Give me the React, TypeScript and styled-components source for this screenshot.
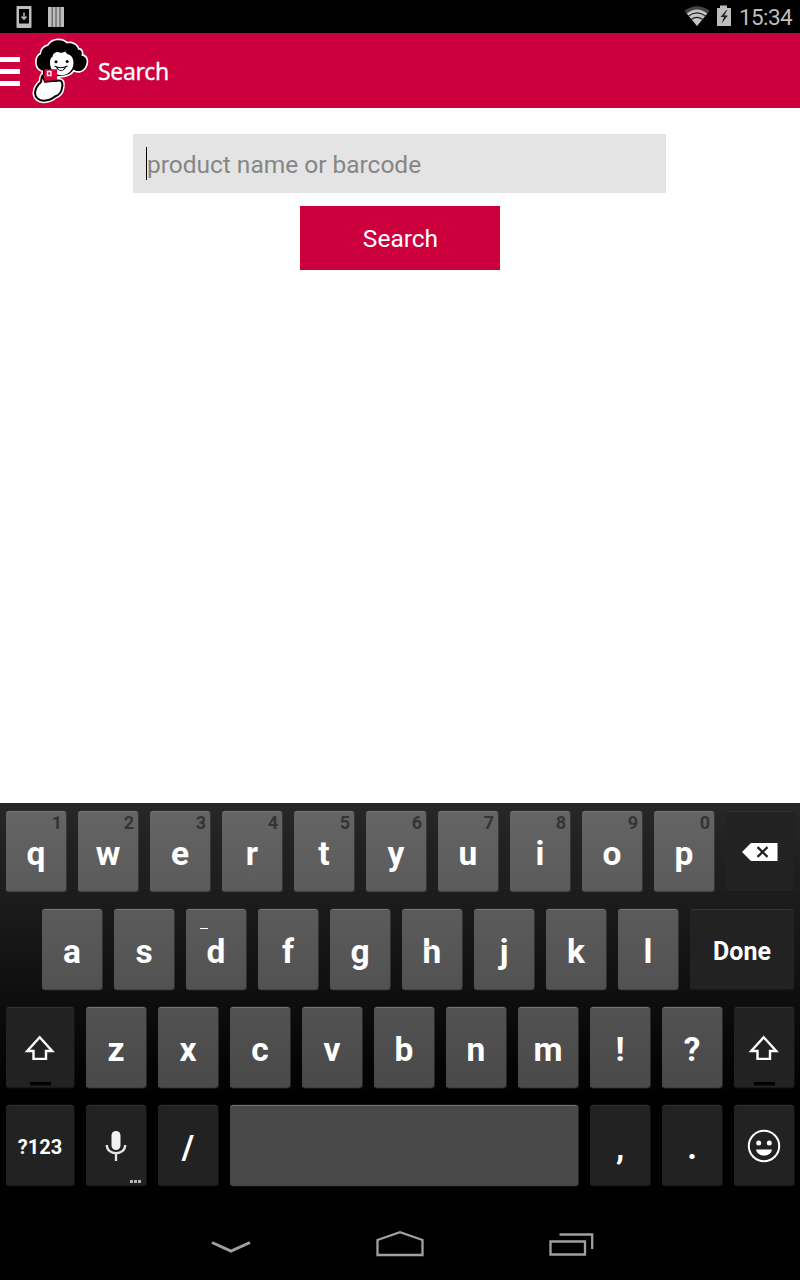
import React from "react";
import styled, { createGlobalStyle } from "styled-components";

const GlobalStyle = createGlobalStyle`
  * { box-sizing: border-box; }
  body { margin: 0; background: #fff; font-family: Roboto, "Liberation Sans", sans-serif; }
`;

const Screen = styled.div`
  width: 800px;
  height: 1280px;
  display: flex;
  flex-direction: column;
  overflow: hidden;
  background: #fff;
`;

const StatusBar = styled.div`
  height: 33px;
  background: #000;
  display: flex;
  justify-content: space-between;
  padding: 0 8px 0 16px;
`;

const StatusIcons = styled.div`
  display: flex;
`;

const Clock = styled.span`
  width: 53px;
  margin-left: 7px;
  font-size: 22.5px;
  line-height: 35px;
  letter-spacing: -0.6px;
  white-space: nowrap;
  color: #bdbdbd;
`;

const ActionBar = styled.header`
  height: 75px;
  background: #cc003c;
  display: flex;
  align-items: center;
`;

const Title = styled.h1`
  margin: 0 0 0 8px;
  font: 400 23px/30px "Noto Sans", "Open Sans", sans-serif;
  letter-spacing: -0.3px;
  -webkit-text-stroke: 0.3px #fff;
  color: #fff;
`;

const Content = styled.main`
  flex: 1;
  display: flex;
  flex-direction: column;
  align-items: center;
  padding-top: 26px;
  gap: 13px;
`;

const SearchField = styled.div`
  width: 533px;
  height: 59px;
  margin-right: 1px;
  padding: 13px 13px 0;
  display: flex;
  background: #e4e4e4;
`;

const Caret = styled.span`
  width: 1px;
  height: 33px;
  background: #000;
`;

const Placeholder = styled.span`
  font-size: 24.5px;
  line-height: 36px;
  letter-spacing: -0.02px;
  color: #868686;
`;

const SearchButton = styled.button`
  width: 200px;
  height: 64px;
  padding: 2px 0 0 1px;
  border: 0;
  background: #cc003c;
  color: #fff;
  font: 400 24.5px/30px Roboto, sans-serif;
`;

const Keyboard = styled.section`
  height: 405px;
  padding: 8px 6px 0;
  display: flex;
  flex-direction: column;
  gap: 17px;
  background: linear-gradient(#272727, #1b1b1b 25%, #0d0d0d 50%, #000 73%);
`;

const KeyRow = styled.div<{ $indent?: number }>`
  display: flex;
  gap: 12px;
  padding-left: ${(p) => p.$indent ?? 0}px;
`;

const tones = [
  ["#646464", "#5b5b5b"],
  ["#5b5b5b", "#525252"],
  ["#525252", "#494949"],
  ["#494949", "#484848"],
];

const Key = styled.div<{ $width?: number; $row?: number; $dark?: boolean; $size?: number }>`
  width: ${(p) => p.$width ?? 60}px;
  flex: none;
  height: 81px;
  position: relative;
  display: flex;
  align-items: center;
  justify-content: center;
  padding-top: 3px;
  border-radius: 3px;
  border-top: 1px solid ${(p) => (p.$dark ? "#333" : "#747474")};
  border-bottom: 1px solid ${(p) => (p.$dark ? "#181818" : "#414141")};
  box-shadow: 0.5px 0 0 0.5px ${(p) => (p.$dark ? "#1b1b1b80" : "#4a4a4a80")};
  background: ${(p) =>
    p.$dark ? "#222" : `linear-gradient(${tones[p.$row ?? 0].join(",")})`};
  color: #fff;
  font-size: ${(p) => p.$size ?? 33.5}px;
  font-weight: 700;
  line-height: 39px;
`;

const Hint = styled.span`
  position: absolute;
  top: 1px;
  right: 4px;
  font-size: 18px;
  line-height: 20px;
  color: #343434;
`;

const LockMark = styled.span`
  position: absolute;
  bottom: 1px;
  width: 21px;
  height: 4px;
  border-radius: 1px;
  background: #000;
  border-bottom: 1px solid #151515;
`;

const MoreDots = styled.span`
  position: absolute;
  right: 5px;
  bottom: 2px;
  display: flex;
  gap: 1px;
  i { width: 3px; height: 3px; background: #b5b5b5; }
`;

const KeyIcon = styled.svg`
  display: block;
  margin: -3px 1px 0 0;
`;

const StrayMark = styled.span<{ $x: number; $y: number; $width: number; $color: string }>`
  position: absolute;
  left: ${(p) => p.$x}px;
  top: ${(p) => p.$y}px;
  width: ${(p) => p.$width}px;
  height: 1px;
  background: ${(p) => p.$color};
`;

const NavBar = styled.nav`
  height: 72px;
  background: #000;
  display: flex;
  justify-content: center;
  padding: 20px 0 0 4px;
  gap: 122px;
`;

const NotificationIcons = () => (
  <svg width="50" height="33" viewBox="16 0 50 33">
    <path fill="#bdbdbd" fillRule="evenodd" d="M17.500 6h13q1 0 1 1v20q0 1-1 1h-13q-1 0-1-1V7q0-1 1-1zM19 9v14.500h10V9z" />
    <path d="M24 12.500v7M21.500 16.500l2.500 2.700 2.500-2.700" fill="none" stroke="#bdbdbd" strokeWidth="1.500" />
    <path fill="#bdbdbd" d="M48 7h16v20h-16z" />
    <path d="M52.200 7v20M56 7v20M60 7v20" stroke="#444" strokeWidth="1" />
  </svg>
);

const WifiBattery = () => (
  <svg width="48" height="33" viewBox="684 0 48 33">
    <path d="M697 26L684.500 10.800Q697 1.500 709.700 10.800z" fill="#444" />
    <path d="M697 26L686.800 13.600Q697 5.500 707.200 13.600z" fill="#c4c4c4" />
    <path d="M688 16.400Q697 9.300 706 16.400M691 19.700Q697 15 703 19.700" fill="none" stroke="#1c1c1c" strokeWidth="1.200" />
    <path d="M717.500 8h2.500V5.500h7V8h3.500q.5 0 .5 .5v17q0 .5-.5 .5h-13q-.5 0-.5-.5v-17q0-.5 .5-.5z" fill="#bdbdbd" />
    <path d="M726.500 10l-6 7h3.500l-2.500 6.500 6.500-8h-3.700l3-5.500z" fill="#222" />
  </svg>
);

const MenuIcon = () => (
  <svg width="28" height="75" viewBox="0 33 28 75">
    <path d="M0 57h20v5H0zM0 69h20v5H0zM0 81h20v5H0z" fill="#fff" />
  </svg>
);

const hair =
  "M43 70.500c-4-.5-6.300-4-6.300-8.500 0-4 1.500-6.500 4.500-8 0-4 3-7.500 7-8 2-4 6-5.800 10.300-5.800s6.500 1.500 8 3.300c6-1 10.500 1.500 11.500 6 4 0 4.300 4 3.300 6 3.500.5 5.300 3 5.300 6 0 4.500-3 9-7 9.500-2.500.3-4.500-.3-6-1.500-2 3.500-5.500 5.500-9.500 6l-9 1-4 1-8-2z";
const arm =
  "M42.500 75.500c-1.500 2-1 5-1.500 6.500-3.500 3-5.700 6.500-6 11 .3 5 4.300 8 8.800 7.700 4.500-.2 8.500-1.700 11.200-4.200 4-1.500 6.500-4.500 7-8.500 1-5 .3-7.700-3.500-7.500L45 81.500z";

const Mascot = () => (
  <svg width="62" height="75" viewBox="28 33 62 75">
    <path d={hair} fill="#fff" stroke="#fff" strokeWidth="3.400" strokeLinejoin="round" />
    <path d={arm} fill="#fff" stroke="#fff" strokeWidth="5" strokeLinejoin="round" />
    <path d={hair} fill="#000" />
    <path d="M50 63c-.2-3 .7-5.500 2.700-6.500 0-3 3-4.500 5-4.500 3 1.500 6 .5 7.500-.5 1 1.500 2 3 3.500 3 3 1 4.800 4.500 4.800 8 0 7.500-5.300 12.800-12.100 12.800-6.500 0-11.200-5.500-11.400-12.300z" fill="#fff" />
    <path d={arm} fill="#fff" stroke="#000" strokeWidth="2" strokeLinejoin="round" />
    <circle cx="56" cy="61.700" r="1.500" />
    <circle cx="67.200" cy="61.500" r="1.500" />
    <path d="M54.500 66.300q7 3 13-.3M56.500 67.500q4.500 6.500 9 0" fill="none" stroke="#000" strokeWidth="1.100" />
    <path d="M44.300 69.300H57V81l-12.700.5z" fill="#d8003c" />
    <path d="M44 81.700l13-.7" stroke="#000" strokeWidth="1.500" />
    <path d="M47.500 71.500h3.500v4h-3.500z" fill="none" stroke="#fff" strokeWidth="1.400" />
  </svg>
);

const ShiftIcon = () => (
  <KeyIcon width="32" height="28" viewBox="0 0 32 28">
    <path d="M15.700 3.300L28.200 17H22V24.900H9.500V17H3.200z" fill="none" stroke="#fff" strokeWidth="2.400" />
  </KeyIcon>
);

const DeleteIcon = () => (
  <KeyIcon width="36" height="20" viewBox="0 0 36 20">
    <path d="M0 10L9 1h26.500v18H9z" fill="#fff" />
    <path d="M15.500 5.200l10 9.600M25.500 5.200l-10 9.600" stroke="#222" strokeWidth="2.300" />
  </KeyIcon>
);

const MicIcon = () => (
  <KeyIcon width="24" height="32" viewBox="0 0 24 32">
    <rect x="7.500" y="1" width="9" height="19" rx="4.500" fill="#f0f0f0" />
    <path d="M2.800 15c0 11 18.400 11 18.400 0M12 23.500V31" fill="none" stroke="#e6e6e6" strokeWidth="2.300" />
  </KeyIcon>
);

const SmileIcon = () => (
  <KeyIcon width="34" height="34" viewBox="0 0 34 34">
    <circle cx="17" cy="17" r="15.200" fill="none" stroke="#fff" strokeWidth="2" />
    <circle cx="11.700" cy="14" r="2.500" fill="#fff" />
    <circle cx="22.300" cy="14" r="2.500" fill="#fff" />
    <path d="M9 20.500h16c-1.500 8-14.500 8-16 0z" fill="#fff" />
  </KeyIcon>
);

const App = () => (
  <Screen>
    <GlobalStyle />
    <StatusBar>
      <StatusIcons><NotificationIcons /></StatusIcons>
      <StatusIcons><WifiBattery /><Clock>15:34</Clock></StatusIcons>
    </StatusBar>
    <ActionBar>
      <MenuIcon />
      <Mascot />
      <Title>Search</Title>
    </ActionBar>
    <Content>
      <SearchField><Caret /><Placeholder>product name or barcode</Placeholder></SearchField>
      <SearchButton>Search</SearchButton>
    </Content>
    <Keyboard>
      <KeyRow>
        {[..."qwertyuiop"].map((c, i) => (
          <Key key={c} $row={0}>{c}<Hint>{(i + 1) % 10}</Hint></Key>
        ))}
        <Key $dark $width={68}><DeleteIcon /></Key>
      </KeyRow>
      <KeyRow $indent={36}>
        {[..."asdfghjkl"].map((c) => (
          <Key key={c} $row={1}>
            {c}
            {c === "d" && <StrayMark $x={14} $y={18} $width={8} $color="#fff" />}
            {c === "h" && <StrayMark $x={23} $y={36} $width={7} $color="#e2a5b8" />}
          </Key>
        ))}
        <Key $dark $width={104} $size={25}>Done</Key>
      </KeyRow>
      <KeyRow>
        <Key $dark $width={68}><ShiftIcon /><LockMark /></Key>
        {[..."zxcvbnm!?"].map((c) => <Key key={c} $row={2}>{c}</Key>)}
        <Key $dark><ShiftIcon /><LockMark /></Key>
      </KeyRow>
      <KeyRow>
        <Key $dark $width={68} $size={20}>?123</Key>
        <Key $dark><MicIcon /><MoreDots><i /><i /><i /></MoreDots></Key>
        <Key $dark>/</Key>
        <Key $row={3} $width={348} />
        <Key $dark>,</Key>
        <Key $dark>.</Key>
        <Key $dark><SmileIcon /></Key>
      </KeyRow>
    </Keyboard>
    <NavBar>
      <svg width="44" height="32" viewBox="209 1228 44 32">
        <path d="M212 1242.500l19 8.500 19-8.500" fill="none" stroke="#a0a0a0" strokeWidth="3" />
      </svg>
      <svg width="50" height="32" viewBox="375 1228 50 32">
        <path d="M377.500 1255v-15L400 1232.200l22.500 7.800v15z" fill="none" stroke="#a0a0a0" strokeWidth="2.300" />
      </svg>
      <svg width="48" height="32" viewBox="547 1228 48 32">
        <path d="M550.500 1241.500h34.500v13h-34.500zM559.500 1234.500h32.700v14.500" fill="none" stroke="#a0a0a0" strokeWidth="2.300" />
      </svg>
    </NavBar>
  </Screen>
);

export default App;
